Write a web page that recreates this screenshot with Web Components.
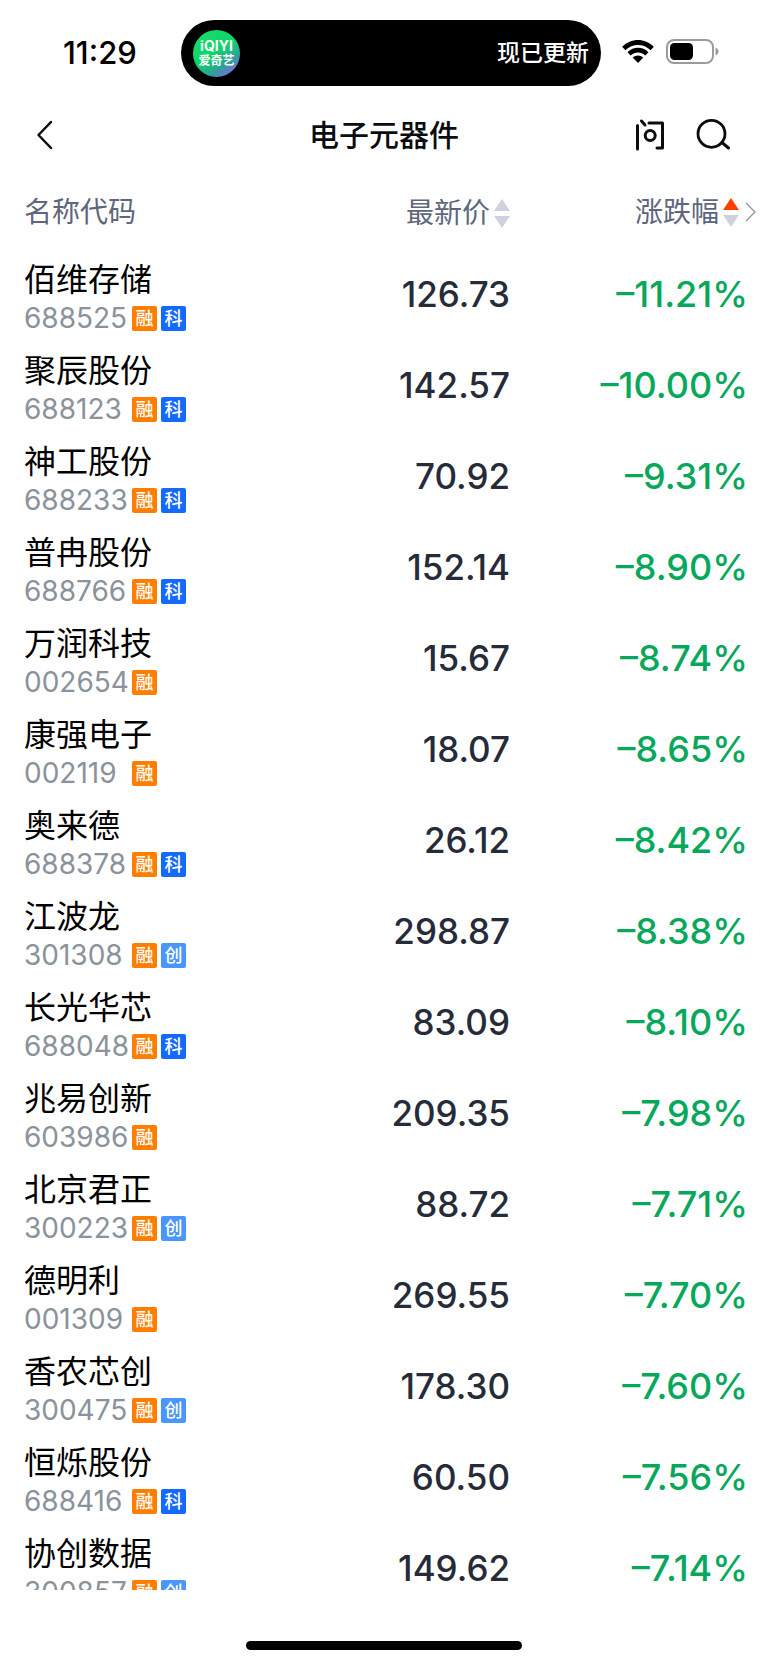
<!DOCTYPE html>
<html lang="zh-CN">
<head>
<meta charset="utf-8">
<meta name="viewport" content="width=device-width, initial-scale=1">
<title>电子元器件</title>
<style>
  body {
    margin: 0;
    background: #fff;
    font-family: Inter, "Noto Sans CJK SC", sans-serif;
  }
</style>
</head>
<body>
<stock-app></stock-app>

<script>
class StatusBar extends HTMLElement {
  constructor() {
    super();
    this.shadow = this.attachShadow({ mode: "open" });
  }

  connectedCallback() {
    this.render();
  }

  render() {
    this.shadow.innerHTML =
      `<style>
        :host {
          display: grid;
          grid-template-columns: 181px 1fr 167px;
          align-items: center;
          padding-top: 20px;
          color: #000;
        }
        .time {
          padding-left: 63px;
          font-size: 31px;
          line-height: 36px;
          font-weight: 500;
        }
        .island {
          display: flex;
          align-items: center;
          justify-content: space-between;
          box-sizing: border-box;
          height: 66px;
          padding: 0 12px;
          border-radius: 33px;
          background: #000;
          color: #fff;
          font-size: 23px;
          font-weight: 500;
        }
        .label {
          padding-bottom: 1px;
          line-height: 32px;
        }
        .logo {
          display: flex;
          flex-direction: column;
          align-items: center;
          justify-content: center;
          width: 47px;
          height: 47px;
          border-radius: 50%;
          background: linear-gradient(145deg, #1ed970 0%, #0bd765 45%, #2f9f9c 72%, #9a5cf0 92%);
          font-size: 12px;
          line-height: 15px;
          font-weight: 700;
        }
        .logo b {
          font-size: 14px;
          font-weight: 700;
        }
        .icons {
          display: flex;
          align-items: center;
          gap: 11px;
          padding: 0 0 3px 20px;
        }
        svg { display: block; }
      </style>
      <span class="time">11:29</span>
      <div class="island">
        <div class="logo"><b>iQIYI</b><span>爱奇艺</span></div>
        <span class="label">现已更新</span>
      </div>
      <div class="icons">
        <svg width="34" height="25" viewBox="0 0 34 25">
          <path d="M1.2 7.8C10-1.2 24-1.2 32.800 7.800L29.600 11.200C22.600 4.300 11.400 4.300 4.400 11.200Z"/>
          <path d="M6.500 13.200C12.500 7.400 21.500 7.400 27.500 13.200L24.300 16.500C20.100 12.500 13.900 12.500 9.700 16.500Z"/>
          <path d="M11.700 18.500C14.700 15.700 19.300 15.700 22.300 18.500L17 24Z"/>
        </svg>
        <svg width="54" height="26" viewBox="0 0 54 26">
          <rect x="1" y="1" width="46" height="23" rx="7" fill="none" stroke="#9b9b9b" stroke-width="2"/>
          <rect x="4" y="4" width="23" height="17" rx="4.500"/>
          <path d="M49.500 8.500C53.500 10 53.500 15 49.500 16.500Z" fill="#9b9b9b"/>
        </svg>
      </div>`;
  }
}
customElements.define("status-bar", StatusBar);


class NavBar extends HTMLElement {
  constructor() {
    super();
    this.shadow = this.attachShadow({ mode: "open" });
  }

  connectedCallback() {
    this.render();
  }

  render() {
    this.shadow.innerHTML =
      `<style>
        :host {
          display: grid;
          grid-template-columns: 1fr auto 1fr;
          align-items: center;
          height: 58px;
          margin: 0 32px 10px;
          color: #0b0c10;
        }
        h1 {
          margin: 0;
          font-size: 30px;
          line-height: 40px;
          font-weight: 500;
        }
        button {
          padding: 0;
          border: 0;
          background: none;
          color: inherit;
          cursor: pointer;
        }
        .actions {
          display: flex;
          justify-content: flex-end;
          gap: 26px;
          padding-right: 4px;
        }
        svg {
          display: block;
          fill: none;
          stroke: currentColor;
          stroke-width: 3;
          stroke-linecap: round;
          stroke-linejoin: round;
        }
      </style>
      <button aria-label="返回">
        <svg width="26" height="34" viewBox="0 0 26 34">
          <path d="M19 4L6.500 17L19 30" stroke-width="2.500"/>
        </svg>
      </button>
      <h1><slot></slot></h1>
      <div class="actions">
        <button aria-label="提问">
          <svg width="38" height="34" viewBox="0 0 38 34">
            <path d="M7.500 7.500V31M11.500 3L15 7M19 5H32.500V30H27"/>
            <circle cx="20.200" cy="17.500" r="5"/>
          </svg>
        </button>
        <button aria-label="搜索">
          <svg width="38" height="34" viewBox="0 0 38 34">
            <circle cx="17.500" cy="15.800" r="13.500" stroke-width="2.800"/>
            <path d="M28.500 25L34.500 30"/>
          </svg>
        </button>
      </div>`;
  }
}
customElements.define("nav-bar", NavBar);


// small square marker after the stock code
class StockTag extends HTMLElement {
  constructor() {
    super();
    this.shadow = this.attachShadow({ mode: "open" });
  }

  connectedCallback() {
    this.render();
  }

  render() {
    this.shadow.innerHTML =
      `<style>
        :host {
          display: flex;
          align-items: center;
          justify-content: center;
          width: 25px;
          height: 25px;
          border-radius: 2px;
          background: #ff7e00;
          color: #fff;
          font-size: 18px;
          line-height: 25px;
          font-weight: 500;
        }
        :host([kind="科"]) { background: #1469ff; }
        :host([kind="创"]) { background: #4a96ff; }
      </style>
      <slot></slot>`;
  }
}
customElements.define("stock-tag", StockTag);


class SortButton extends HTMLElement {
  constructor() {
    super();
    this.shadow = this.attachShadow({ mode: "open" });
  }

  connectedCallback() {
    this.render();
  }

  render() {
    var up = this.hasAttribute("active") ? "#ff4000" : "#cdd2de";
    this.shadow.innerHTML =
      `<style>
        :host { display: inline-flex; }
        button {
          display: flex;
          align-items: center;
          gap: 4px;
          padding: 0;
          border: 0;
          background: none;
          color: inherit;
          font: inherit;
          cursor: pointer;
        }
        svg { display: block; }
      </style>
      <button>
        <slot></slot>
        <svg width="16" height="30" viewBox="0 0 16 30">
          <path d="M8 1L16 13H0Z" fill="${up}"/>
          <path d="M0 18H16L8 30Z" fill="#cdd2de"/>
        </svg>
      </button>`;
  }
}
customElements.define("sort-button", SortButton);


class StockTable extends HTMLElement {
  constructor() {
    super();
    this.shadow = this.attachShadow({ mode: "open" });
    this._data = [];
  }

  connectedCallback() {
    this.render();
  }

  set data(value) {
    this._data = value;
    this.render();
  }

  get data() {
    return this._data;
  }

  row(item) {
    var tags = item[4].split("").map((t) => `<stock-tag kind="${t}">${t}</stock-tag>`).join("");
    return `<tr>
      <td class="stock">
        <div class="name">${item[0]}</div>
        <div class="info"><span class="code">${item[1]}</span>${tags}</div>
      </td>
      <td class="price">${item[2]}</td>
      <td class="change">–${item[3]}%</td>
    </tr>`;
  }

  render() {
    this.shadow.innerHTML =
      `<style>
        :host { display: block; overflow: hidden; }
        table {
          width: 100%;
          table-layout: fixed;
          border-collapse: collapse;
        }
        th, td { padding: 0; text-align: right; }
        th {
          height: 72px;
          padding-top: 2px;
          color: #5d667b;
          font-size: 28px;
          line-height: 40px;
          font-weight: 400;
        }
        th:first-child, td:first-child {
          padding-left: 24px;
          text-align: left;
        }
        th:nth-child(2) { width: 200px; }
        th:nth-child(3) { width: 246px; padding-right: 12px; }
        .more {
          display: flex;
          align-items: center;
          justify-content: flex-end;
          gap: 6px;
        }
        th sort-button { vertical-align: middle; }
        td { height: 91px; }
        .stock { vertical-align: top; }
        .name {
          padding-top: 13px;
          color: #000;
          font-size: 32px;
          line-height: 38px;
        }
        .info {
          display: flex;
          align-items: center;
          gap: 4px;
          height: 38px;
        }
        .code {
          width: 104px;
          color: #8a929b;
          font-size: 28px;
          line-height: 38px;
        }
        .price, .change {
          line-height: 44px;
          font-weight: 450;
        }
        .price { font-size: 35px; color: #262b3a; }
        .change { padding-right: 20px; font-size: 36px; color: #07a85b; }
      </style>
      <table>
        <thead>
          <tr>
            <th>名称代码</th>
            <th><sort-button>最新价</sort-button></th>
            <th>
              <div class="more">
                <sort-button active>涨跌幅</sort-button>
                <svg width="11" height="20" viewBox="0 0 11 20" fill="none" stroke="#8f939b" stroke-width="1.300">
                  <path d="M1 1L10 10L1 19"/>
                </svg>
              </div>
            </th>
          </tr>
        </thead>
        <tbody>${this._data.map((item) => this.row(item)).join("")}</tbody>
      </table>`;
  }
}
customElements.define("stock-table", StockTable);


class StockApp extends HTMLElement {
  constructor() {
    super();
    this.shadow = this.attachShadow({ mode: "open" });
  }

  connectedCallback() {
    this.render();
  }

  render() {
    this.shadow.innerHTML =
      `<style>
        :host {
          display: flex;
          flex-direction: column;
          height: 100vh;
        }
        status-bar { padding-bottom: 20px; }
        stock-table { flex: 1; min-height: 0; }
        footer {
          display: flex;
          align-items: center;
          justify-content: center;
          height: 39px;
          padding: 36px 0 0;
        }
        .home {
          width: 36%;
          height: 9px;
          border-radius: 5px;
          background: #000;
        }
      </style>
      <status-bar></status-bar>
      <nav-bar>电子元器件</nav-bar>
      <stock-table></stock-table>
      <footer><div class="home"></div></footer>`;

    // name, code, price, drop in percent, tags
    this.shadow.querySelector("stock-table").data = [
      ["佰维存储", "688525", "126.73", "11.21", "融科"],
      ["聚辰股份", "688123", "142.57", "10.00", "融科"],
      ["神工股份", "688233", "70.92", "9.31", "融科"],
      ["普冉股份", "688766", "152.14", "8.90", "融科"],
      ["万润科技", "002654", "15.67", "8.74", "融"],
      ["康强电子", "002119", "18.07", "8.65", "融"],
      ["奥来德", "688378", "26.12", "8.42", "融科"],
      ["江波龙", "301308", "298.87", "8.38", "融创"],
      ["长光华芯", "688048", "83.09", "8.10", "融科"],
      ["兆易创新", "603986", "209.35", "7.98", "融"],
      ["北京君正", "300223", "88.72", "7.71", "融创"],
      ["德明利", "001309", "269.55", "7.70", "融"],
      ["香农芯创", "300475", "178.30", "7.60", "融创"],
      ["恒烁股份", "688416", "60.50", "7.56", "融科"],
      ["协创数据", "300857", "149.62", "7.14", "融创"]
    ];
  }
}
customElements.define("stock-app", StockApp);
</script>
</body>
</html>
